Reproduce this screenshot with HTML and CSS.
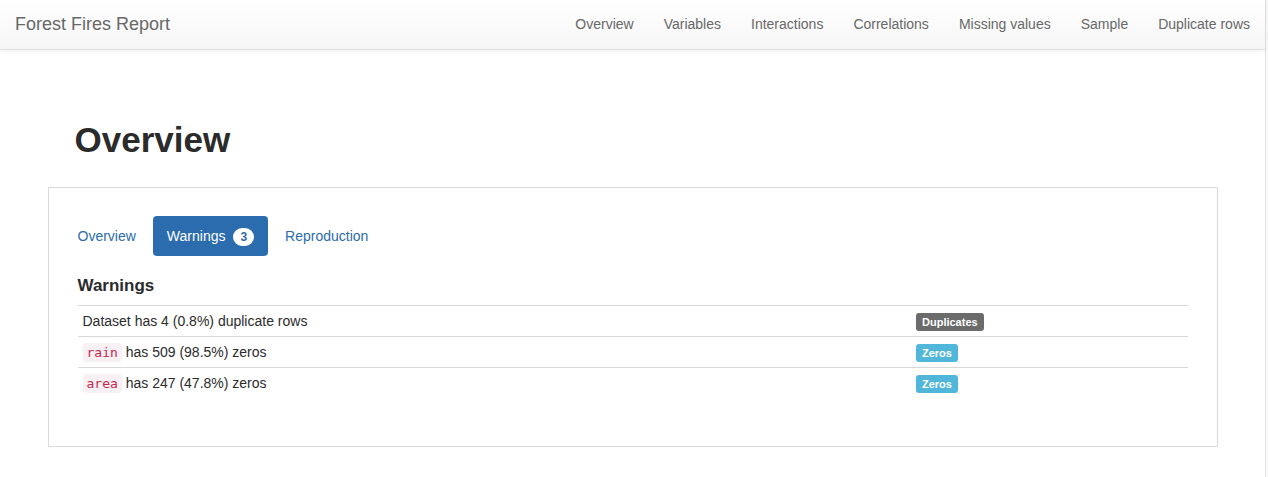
FILE: index.html
```html
<!DOCTYPE html>
<html lang="en">
<head>
<meta charset="utf-8">
<title>Forest Fires Report</title>
<link rel="stylesheet" href="styles.css">
</head>
<body>
<div class="page">
  <nav class="navbar">
    <a class="brand" href="#top">Forest Fires Report</a>
    <ul class="nav-links">
      <li><a href="#overview">Overview</a></li>
      <li><a href="#variables">Variables</a></li>
      <li><a href="#interactions">Interactions</a></li>
      <li><a href="#correlations">Correlations</a></li>
      <li><a href="#missing">Missing values</a></li>
      <li><a href="#sample">Sample</a></li>
      <li><a href="#duplicate">Duplicate rows</a></li>
    </ul>
  </nav>
  <main class="container">
    <h1 class="section-title" id="overview">Overview</h1>
    <section class="panel">
      <ul class="tabs">
        <li><a class="tab" href="#tab-overview">Overview</a></li>
        <li><a class="tab tab-active" href="#tab-warnings">Warnings <span class="badge">3</span></a></li>
        <li><a class="tab" href="#tab-reproduction">Reproduction</a></li>
      </ul>
      <div class="tab-content" id="tab-warnings">
        <h2 class="table-title">Warnings</h2>
        <table class="warnings">
          <tbody>
            <tr><td class="message">Dataset has 4 (0.8%) duplicate rows</td><td class="kind"><span class="label label-default">Duplicates</span></td></tr>
            <tr><td class="message"><code>rain</code> has 509 (98.5%) zeros</td><td class="kind"><span class="label label-info">Zeros</span></td></tr>
            <tr><td class="message"><code>area</code> has 247 (47.8%) zeros</td><td class="kind"><span class="label label-info">Zeros</span></td></tr>
          </tbody>
        </table>
      </div>
    </section>
  </main>
</div>
</body>
</html>
```
FILE: styles.css
```css
* {
  box-sizing: border-box;
}

body {
  margin: 0;
  background: #fafafa;
  color: #2b2b2b;
  font: 14px/20px "Liberation Sans", Arial, sans-serif;
}

a {
  color: #2b6cae;
  text-decoration: none;
}

ul {
  margin: 0;
  padding: 0;
  list-style: none;
}

.page {
  min-height: 100vh;
  margin-right: 2px;
  border-right: 1px solid #e4e4e4;
  background: #fff;
}

.navbar {
  display: flex;
  justify-content: space-between;
  min-height: 50px;
  border-bottom: 1px solid #e0e0e0;
  background: linear-gradient(#fff, #f6f6f6);
  box-shadow: 0 1px 5px rgba(0, 0, 0, 0.07);
}

.navbar a {
  display: block;
  padding: 14px 15px;
  color: #686868;
}

.navbar .brand {
  font-size: 18px;
}

.nav-links {
  display: flex;
}

.container {
  max-width: 1170px;
  margin: 0 auto;
}

.section-title {
  margin: 0;
  padding: 70px 27px 28px;
  font-size: 35px;
  line-height: 39px;
  font-weight: 700;
}

.panel {
  padding: 28px 29px 48px 15px;
  border: 1px solid #dadae2;
}

.tabs {
  display: flex;
  gap: 3px;
}

.tab {
  display: block;
  padding: 10px 14px;
  border-radius: 4px;
}

.tab-active {
  background: #2b6cae;
  color: #fff;
}

.badge {
  display: inline-block;
  min-width: 10px;
  margin-left: 4px;
  padding: 3px 7px;
  border-radius: 10px;
  background: #fff;
  color: #2b6cae;
  font-size: 12px;
  font-weight: 700;
  line-height: 12px;
  vertical-align: middle;
}

.tab-content {
  padding: 20px 0 0 14px;
}

.table-title {
  margin: 0 0 9px;
  font-size: 17px;
  line-height: 20px;
}

.warnings {
  width: 100%;
  border-spacing: 0;
  table-layout: fixed;
}

.warnings td {
  height: 31px;
  padding: 5px;
  border-top: 1px solid #d8d8d8;
  vertical-align: top;
}

.warnings .message {
  width: 75%;
}

.warnings .kind {
  padding-left: 6px;
}

code {
  padding: 2px 4px;
  border-radius: 4px;
  background: #f9f0f3;
  color: #c7254e;
  font: 13px "DejaVu Sans Mono", monospace;
}

.label {
  display: inline-block;
  padding: 3px 6px;
  border-radius: 3px;
  color: #fff;
  font-size: 11px;
  font-weight: 700;
  line-height: 12px;
}

.label-default {
  background: #6b6b6b;
}

.label-info {
  background: #51b7da;
}
```
